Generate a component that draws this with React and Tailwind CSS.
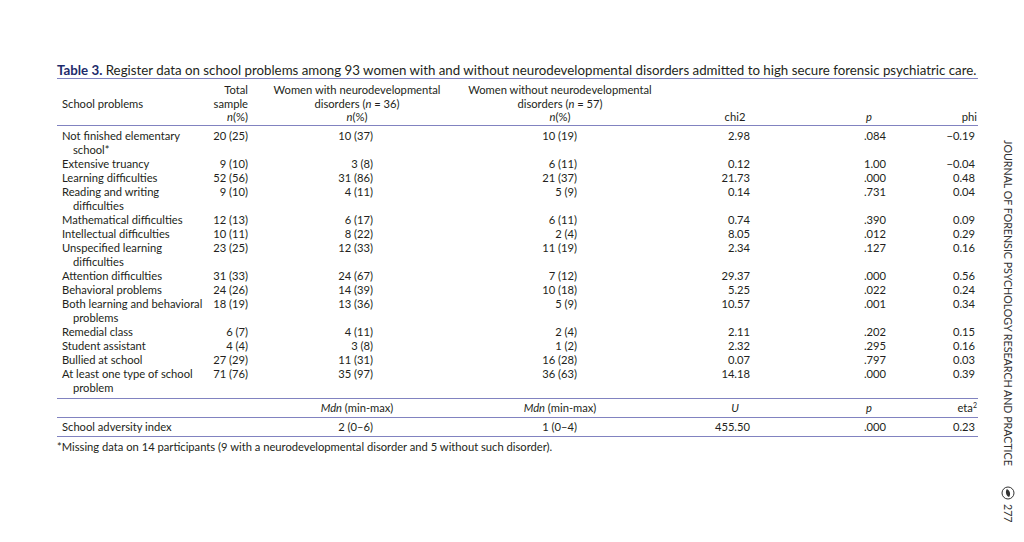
import React from 'react';

const rows = [
  [['Not finished elementary', 'school*'], '20 (25)', '10 (37)', '10 (19)', '2.98', '.084', '\u22120.19'],
  [['Extensive truancy'], '9 (10)', '3 (8)', '6 (11)', '0.12', '1.00', '\u22120.04'],
  [['Learning difficulties'], '52 (56)', '31 (86)', '21 (37)', '21.73', '.000', '0.48'],
  [['Reading and writing', 'difficulties'], '9 (10)', '4 (11)', '5 (9)', '0.14', '.731', '0.04'],
  [['Mathematical difficulties'], '12 (13)', '6 (17)', '6 (11)', '0.74', '.390', '0.09'],
  [['Intellectual difficulties'], '10 (11)', '8 (22)', '2 (4)', '8.05', '.012', '0.29'],
  [['Unspecified learning', 'difficulties'], '23 (25)', '12 (33)', '11 (19)', '2.34', '.127', '0.16'],
  [['Attention difficulties'], '31 (33)', '24 (67)', '7 (12)', '29.37', '.000', '0.56'],
  [['Behavioral problems'], '24 (26)', '14 (39)', '10 (18)', '5.25', '.022', '0.24'],
  [['Both learning and behavioral', 'problems'], '18 (19)', '13 (36)', '5 (9)', '10.57', '.001', '0.34'],
  [['Remedial class'], '6 (7)', '4 (11)', '2 (4)', '2.11', '.202', '0.15'],
  [['Student assistant'], '4 (4)', '3 (8)', '1 (2)', '2.32', '.295', '0.16'],
  [['Bullied at school'], '27 (29)', '11 (31)', '16 (28)', '0.07', '.797', '0.03'],
  [['At least one type of school', 'problem'], '71 (76)', '35 (97)', '36 (63)', '14.18', '.000', '0.39'],
];

const cols = 'grid grid-cols-[148px_43px_125px_204px_173px_136px_89px]';

function DataRow({ row }) {
  const [label, ...vals] = row;
  return (
    <div className={cols}>
      <div className="pl-[5px] whitespace-nowrap">
        <div>{label[0]}</div>
        {label[1] && <div className="pl-[11px]">{label[1]}</div>}
      </div>
      {vals.map((v, i) => (
        <div key={i} className="text-right">{v}</div>
      ))}
    </div>
  );
}

function Logo() {
  return (
    <svg width="14" height="14" viewBox="0 0 14 14">
      <circle cx="7" cy="7" r="6" fill="none" stroke="#333" strokeWidth="1" />
      <path d="M7 2.8 C9.6 5 9.6 9 7 11.2 C4.4 9 4.4 5 7 2.8Z" fill="#333" transform="rotate(-15 7 7)" />
    </svg>
  );
}

export default function App() {
  return (
    <div className="w-[1024px] h-[542px] bg-white flex font-['Lato',sans-serif] text-[#231f20] overflow-hidden">
      <div className="ml-[57px] w-[921px] shrink-0 pt-[62px]">
        <div className="text-[13.3px] leading-[16px] whitespace-nowrap border-b-[1.5px] border-[#8183c0]">
          <span className="font-bold text-[#1d2b6b]">Table 3.</span> Register data on school problems among 93 women with and without neurodevelopmental disorders admitted to high secure forensic psychiatric care.
        </div>

        <div className="text-[11.2px]">
          <div className="flex leading-[13.5px] pt-[4px] pb-[1px] border-b-[1.5px] border-[#8183c0]">
            <div className="w-[148px] pl-[5px] self-center">School problems</div>
            <div className="w-[43px] text-right">
              <div>Total</div>
              <div>sample</div>
              <div><i>n</i>(%)</div>
            </div>
            <div className="w-[7px]" />
            <div className="w-[204px] text-center">
              <div>Women with neurodevelopmental</div>
              <div>disorders (<i>n</i> = 36)</div>
              <div><i>n</i>(%)</div>
            </div>
            <div className="w-[1px]" />
            <div className="w-[200px] text-center">
              <div>Women without neurodevelopmental</div>
              <div>disorders (<i>n</i> = 57)</div>
              <div><i>n</i>(%)</div>
            </div>
            <div className="w-[150px] text-center self-end">chi2</div>
            <div className="w-[118px] text-center self-end"><i>p</i></div>
            <div className="w-[49px] text-right self-end">phi</div>
          </div>

          <div className="leading-[14px] pt-[3px] pb-[3px] border-b-[1.5px] border-[#8183c0]">
            {rows.map((r, i) => (
              <DataRow key={i} row={r} />
            ))}
          </div>

          <div className="flex leading-[14px] pt-[2px] pb-[2px] border-b-[1.5px] border-[#8183c0]">
            <div className="w-[198px]" />
            <div className="w-[204px] text-center"><i>Mdn</i> (min-max)</div>
            <div className="w-[1px]" />
            <div className="w-[200px] text-center"><i>Mdn</i> (min-max)</div>
            <div className="w-[150px] text-center"><i>U</i></div>
            <div className="w-[118px] text-center"><i>p</i></div>
            <div className="w-[49px] text-right">eta<sup className="text-[7px]">2</sup></div>
          </div>

          <div className={`${cols} leading-[14px] pt-[2px] pb-[2px] border-b-[1.5px] border-[#8183c0]`}>
            <div className="pl-[5px]">School adversity index</div>
            <div />
            <div className="text-right">2 (0–6)</div>
            <div className="text-right">1 (0–4)</div>
            <div className="text-right">455.50</div>
            <div className="text-right">.000</div>
            <div className="text-right">0.23</div>
          </div>

          <div className="leading-[14px] mt-[3px]">
            *Missing data on 14 participants (9 with a neurodevelopmental disorder and 5 without such disorder).
          </div>
        </div>
      </div>

      <div className="ml-[23px] pt-[140px] flex flex-col items-center text-[10.65px] text-[#333]">
        <div className="[writing-mode:vertical-rl] whitespace-nowrap leading-[14px]">
          JOURNAL OF FORENSIC PSYCHOLOGY RESEARCH AND PRACTICE
        </div>
        <div className="mt-[20px]">
          <Logo />
        </div>
        <div className="mt-[4px] [writing-mode:vertical-rl] leading-[14px]">277</div>
      </div>
    </div>
  );
}
